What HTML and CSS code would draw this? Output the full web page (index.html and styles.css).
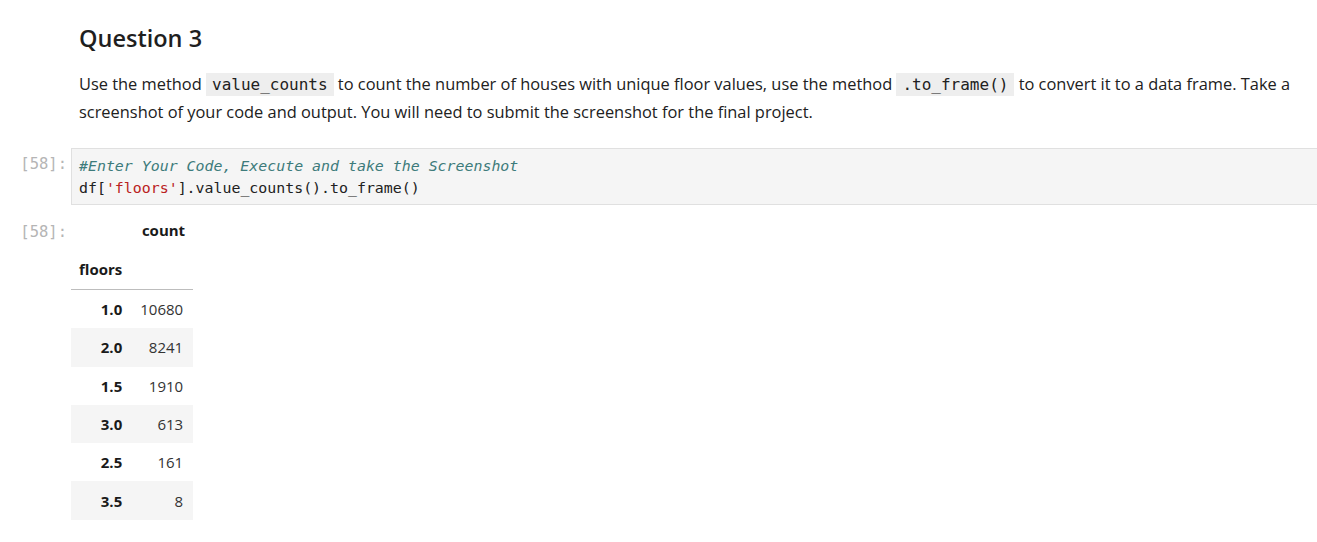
FILE: index.html
```html
<!DOCTYPE html>
<html>
<head>
<meta charset="utf-8">
<link rel="stylesheet" href="styles.css">
</head>
<body>
<div class="notebook">
  <div class="cell md-cell">
    <div class="prompt"></div>
    <div class="md">
      <h2>Question 3</h2>
      <p><span>Use the method </span><code>value_counts</code><span> to count the number of houses with unique floor values, use the method </span><code>.to_frame()</code><span> to convert it to a data frame. Take a </span><span>screenshot of your code and output. You will need to submit the screenshot for the final project.</span></p>
    </div>
  </div>
  <div class="cell code-cell">
    <div class="prompt">[58]:</div>
    <div class="input"><pre><span class="c">#Enter Your Code, Execute and take the Screenshot</span>
df[<span class="s">'floors'</span>].value_counts().to_frame()</pre></div>
  </div>
  <div class="cell out-cell">
    <div class="prompt">[58]:</div>
    <div class="output">
      <table class="df">
        <thead>
          <tr><th></th><th class="col">count</th></tr>
          <tr class="idxname"><th>floors</th><th></th></tr>
        </thead>
        <tbody>
          <tr><th>1.0</th><td>10680</td></tr>
          <tr><th>2.0</th><td>8241</td></tr>
          <tr><th>1.5</th><td>1910</td></tr>
          <tr><th>3.0</th><td>613</td></tr>
          <tr><th>2.5</th><td>161</td></tr>
          <tr><th>3.5</th><td>8</td></tr>
        </tbody>
      </table>
    </div>
  </div>
</div>
</body>
</html>
```
FILE: styles.css
```css
html, body {
  margin: 0;
  padding: 0;
  background: #fff;
}
body {
  font-family: "Open Sans", "Noto Sans", sans-serif;
  color: #212121;
}
.notebook {
  padding-top: 20px;
}
.cell {
  display: flex;
  align-items: flex-start;
}
.prompt {
  width: 67px;
  flex: none;
  padding-right: 4px;
  text-align: right;
  font-family: "DejaVu Sans Mono", monospace;
  font-size: 15.5px;
  color: #b5b5b5;
  line-height: 22px;
}
.md {
  padding-left: 8px;
  padding-right: 8px;
  flex: 1;
}
.md h2 {
  font-size: 23.5px;
  font-weight: 600;
  margin: 0 0 14px 0;
  line-height: 36px;
  color: #1f1f1f;
}
.md p {
  margin: 0;
  font-size: 16.4px;
  line-height: 28px;
}
.md code {
  display: inline-block;
  font-family: "DejaVu Sans Mono", monospace;
  font-size: 16px;
  line-height: 23px;
  background: #eee;
  padding: 0 6px;
}
.code-cell {
  margin-top: 22px;
}
.code-cell .prompt {
  padding-top: 5px;
}
.input {
  flex: 1;
  background: #f5f5f5;
  border: 1px solid #e0e0e0;
  border-right: none;
  height: 55px;
  box-sizing: content-box;
}
.input pre {
  margin: 0;
  padding: 6px 7px 4px;
  font-family: "DejaVu Sans Mono", monospace;
  font-size: 14.9px;
  line-height: 22px;
  color: #212121;
}
.c { color: #3d7b7b; font-style: italic; }
.s { color: #ba2121; }
.out-cell {
  margin-top: 13px;
}
.out-cell .prompt {
  padding-top: 3px;
}
.output {
  flex: 1;
}
table.df {
  border-collapse: collapse;
  font-size: 15px;
  font-family: "Open Sans", "Noto Sans", sans-serif;
}
table.df th, table.df td {
  padding: 0 8px;
  text-align: right;
  height: 38.3px;
}
table.df thead th {
  font-weight: 700;
  color: #1a1a1a;
}
table.df thead tr:first-child th {
  height: 28px;
  vertical-align: top;
  padding-top: 2px;
}
table.df thead tr.idxname th {
  height: 41px;
  border-bottom: 1px solid #bdbdbd;
  text-align: left;
  vertical-align: middle;
}
table.df tbody th {
  font-weight: 700;
  color: #1a1a1a;
}
table.df tbody td {
  color: #333;
  padding-left: 10px;
  padding-right: 10px;
}
table.df tbody tr:nth-child(even) {
  background: #f5f5f5;
}
```
